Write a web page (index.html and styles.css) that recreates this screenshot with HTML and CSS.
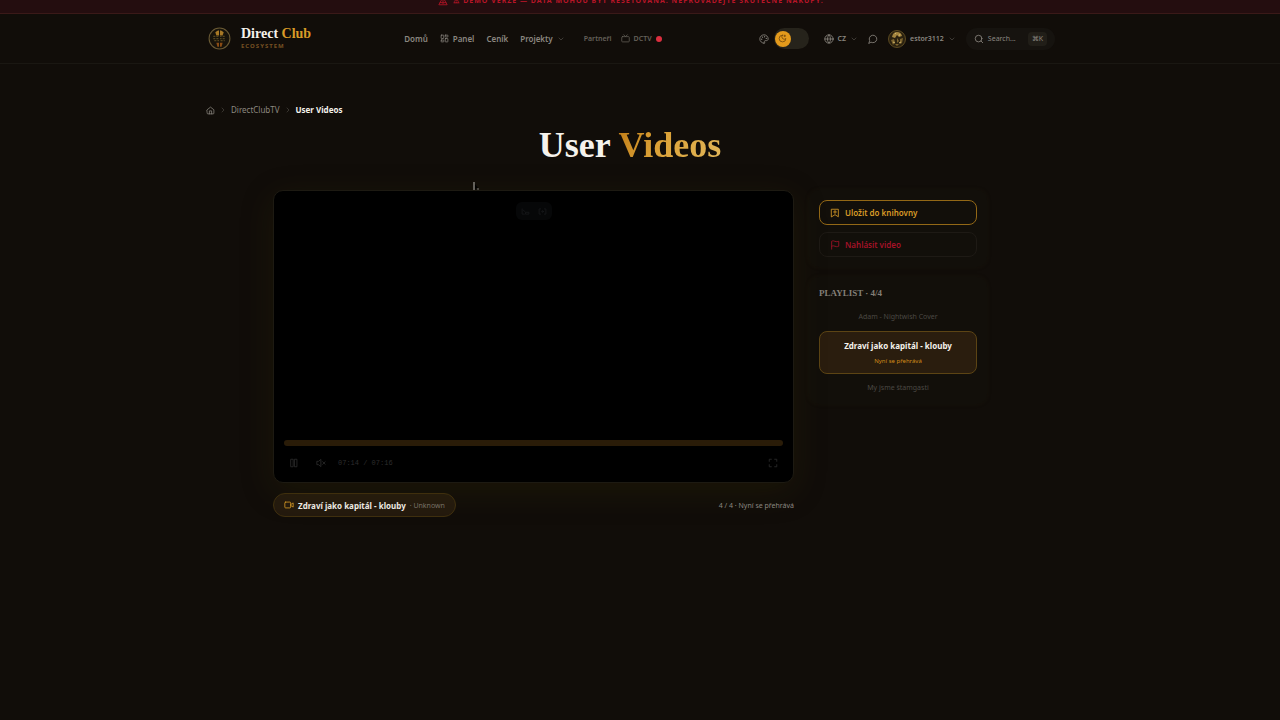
FILE: index.html
```html
<!DOCTYPE html>
<html lang="cs">
<head>
    <meta charset="UTF-8">
    <meta name="viewport" content="width=device-width, initial-scale=1.0">
    <title>User Videos</title>
    <link rel="stylesheet" href="styles.css">
</head>
<body>
    <!-- Demo banner -->
    <div class="banner">
        <p class="banner-text">
            <svg class="icon" viewBox="0 0 24 24"><path d="M12 3 2 21h20L12 3zM12 10v5M12 18v.5M5 16h14"/></svg>
            <span>⚠ Demo verze — data mohou být resetována. Neprovádějte skutečné nákupy.</span>
        </p>
    </div>

    <!-- Header -->
    <header class="header">
        <div class="header-inner">
            <a class="brand" href="#">
                <svg class="brand-logo" viewBox="0 0 24 24">
                    <circle cx="12" cy="12" r="10" fill="#17130b" stroke="#6a5a34" stroke-width="1"/>
                    <path d="M8 6q4-4 8 0l-1 3H9z" fill="#a87925"/>
                    <path d="M6 10h12M6 12h12M7 14h10" stroke="#54451f" stroke-width="1.2" stroke-dasharray="2 1"/>
                    <path d="M9 16h6l-1 4h-4z" fill="#8a4c14"/>
                    <path d="M12 3v18" stroke="#17130b" stroke-width="1"/>
                </svg>
                <span class="brand-text">
                    <span class="brand-name">Direct <span class="gold">Club</span></span>
                    <span class="brand-sub">Ecosystem</span>
                </span>
            </a>

            <nav class="nav">
                <a href="#">Domů</a>
                <a href="#">
                    <svg class="icon" viewBox="0 0 24 24"><rect x="3" y="3" width="7" height="9" rx="1"/><rect x="14" y="3" width="7" height="5" rx="1"/><rect x="14" y="12" width="7" height="9" rx="1"/><rect x="3" y="16" width="7" height="5" rx="1"/></svg>
                    Panel
                </a>
                <a href="#">Ceník</a>
                <a href="#">
                    Projekty
                    <svg class="icon chevron" viewBox="0 0 24 24"><path d="m6 9 6 6 6-6"/></svg>
                </a>
                <span class="nav-minor">
                    <a href="#">Partneři</a>
                    <a href="#">
                        <svg class="icon" viewBox="0 0 24 24"><rect x="2" y="7" width="20" height="14" rx="2"/><path d="m17 2-5 5-5-5"/></svg>
                        DCTV
                        <span class="live-dot"></span>
                    </a>
                </span>
            </nav>

            <div class="tools">
                <div class="theme">
                    <button class="icon-button" aria-label="Paleta">
                        <svg class="icon" viewBox="0 0 24 24"><path d="M12 22a10 10 0 1 1 10-10c0 3-2.500 4-5 4h-2c-2 0-2.500 2-1.500 3s0 3-1.500 3z"/><path d="M13.500 6.500v.1M17.500 10.500v.1M8.500 7.500v.1M6.500 12.500v.1" stroke-width="3"/></svg>
                    </button>
                    <button class="switch" aria-label="Tmavý režim">
                        <span class="switch-knob">
                            <svg class="icon" viewBox="0 0 24 24"><path d="M12 3a6 6 0 0 0 9 9 9 9 0 1 1-9-9zM18 3v4M16 5h4"/></svg>
                        </span>
                    </button>
                </div>
                <button class="tool-button">
                    <svg class="icon" viewBox="0 0 24 24"><circle cx="12" cy="12" r="10"/><path d="M12 2a15 15 0 0 0 0 20 15 15 0 0 0 0-20M2 12h20"/></svg>
                    CZ
                    <svg class="icon chevron" viewBox="0 0 24 24"><path d="m6 9 6 6 6-6"/></svg>
                </button>
                <button class="icon-button" aria-label="Zprávy">
                    <svg class="icon" viewBox="0 0 24 24"><path d="M7.900 20A9 9 0 1 0 4 16.100L2 22z"/></svg>
                </button>
                <button class="tool-button user">
                    <svg class="avatar" viewBox="0 0 18 18">
                        <circle cx="9" cy="9" r="8.500" fill="#2a2110" stroke="#5d4b22"/>
                        <path d="M4 7q1-5 5-5t5 4l-3 1-2-2-2 3z" fill="#a58640"/>
                        <path d="M3 10l3-1 1 3-2 3zM9 8l2 3-2 2zM12 9l3-1-1 5-2 1zM7 14h4l-2 2z" fill="#7c642e"/>
                        <path d="M7 3l1 1M12 4l-1 2M5 12l2 1M11 13l2-1" stroke="#d0b56a"/>
                    </svg>
                    estor3112
                    <svg class="icon chevron" viewBox="0 0 24 24"><path d="m6 9 6 6 6-6"/></svg>
                </button>
                <button class="search">
                    <svg class="icon" viewBox="0 0 24 24"><circle cx="11" cy="11" r="8"/><path d="m21 21-4.300-4.300"/></svg>
                    Search...
                    <kbd>⌘K</kbd>
                </button>
            </div>
        </div>
    </header>

    <main class="page">
        <nav class="breadcrumb">
            <a href="#" aria-label="Home"><svg class="icon" viewBox="0 0 24 24"><path d="M3 10l9-7 9 7v9a2 2 0 0 1-2 2H5a2 2 0 0 1-2-2zM9 21v-8h6v8"/></svg></a>
            <svg class="icon separator" viewBox="0 0 24 24"><path d="m9 18 6-6-6-6"/></svg>
            <a href="#">DirectClubTV</a>
            <svg class="icon separator" viewBox="0 0 24 24"><path d="m9 18 6-6-6-6"/></svg>
            <span class="current">User Videos</span>
        </nav>

        <h1>User <span class="gold">Videos</span></h1>

        <div class="watch">
            <section class="video">
                <div class="player">
                    <div class="player-badge">
                        <svg class="icon" viewBox="0 0 24 24"><path d="M3 5v14h6M13 14h8v5h-8zM6 8l4 4"/></svg>
                        <svg class="icon" viewBox="0 0 24 24"><path d="M7 5H3v14h4M17 5h4v14h-4"/><circle cx="12" cy="12" r="2"/></svg>
                    </div>
                    <div class="player-bottom">
                        <div class="progress"></div>
                        <div class="controls">
                            <div class="control-buttons">
                                <button class="icon-button" aria-label="Pozastavit"><svg class="icon" viewBox="0 0 24 24"><rect x="5" y="3" width="5" height="18"/><rect x="14" y="3" width="5" height="18"/></svg></button>
                                <button class="icon-button" aria-label="Zvuk"><svg class="icon" viewBox="0 0 24 24"><path d="M11 4 6 8H2v8h4l5 4zM22 9l-6 6M16 9l6 6"/></svg></button>
                            </div>
                            <span class="time">07:14 / 07:16</span>
                            <button class="icon-button fullscreen" aria-label="Celá obrazovka"><svg class="icon" viewBox="0 0 24 24"><path d="M3 8V3h5M16 3h5v5M21 16v5h-5M8 21H3v-5"/></svg></button>
                        </div>
                    </div>
                    <svg class="pointer" viewBox="0 0 6 9"><path d="M1 0v8" stroke="#b5b3ae"/><path d="M2 2l3 4H3L2 8z" fill="#000"/><path d="M4 7h2" stroke="#7d7b76"/></svg>
                </div>
                <div class="video-info">
                    <div class="video-title">
                        <svg class="icon" viewBox="0 0 24 24"><rect x="2" y="5" width="14" height="14" rx="2"/><path d="m16 13 6 4V7l-6 4"/></svg>
                        <strong>Zdraví jako kapitál - klouby</strong>
                        <span>· Unknown</span>
                    </div>
                    <span class="position">4 / 4 · Nyní se přehrává</span>
                </div>
            </section>

            <aside class="sidebar">
                <div class="panel actions">
                    <button class="action save">
                        <svg class="icon" viewBox="0 0 24 24"><path d="M4 3h16v18l-8-5-8 5zM12 6v7M8.500 9.500h7"/></svg>
                        Uložit do knihovny
                    </button>
                    <button class="action report">
                        <svg class="icon" viewBox="0 0 24 24"><path d="M4 22V3s2-1 4-1 4 2 7 2 6-1 6-1v12s-2 1-5 1-5-2-8-2-4 1-4 1"/></svg>
                        Nahlásit video
                    </button>
                </div>
                <div class="panel playlist">
                    <h2>Playlist · 4/4</h2>
                    <button class="item">Adam - Nightwish Cover</button>
                    <button class="item active">
                        <strong>Zdraví jako kapitál - klouby</strong>
                        <small>Nyní se přehrává</small>
                    </button>
                    <button class="item">My jsme štamgasti</button>
                </div>
            </aside>
        </div>
    </main>
</body>
</html>
```
FILE: styles.css
```css
* {
    box-sizing: border-box;
}

body {
    margin: 0;
    min-height: 100vh;
    background-color: #110d09;
    color: #f5f2ec;
    font-family: "Noto Sans", sans-serif;
    font-size: 8px;
}

a {
    color: inherit;
    text-decoration: none;
}

button {
    padding: 0;
    border: none;
    background: none;
    color: inherit;
    font: inherit;
    cursor: pointer;
}

.icon {
    display: block;
    flex: none;
    width: 10px;
    height: 10px;
    fill: none;
    stroke: currentColor;
    stroke-width: 2;
    stroke-linecap: round;
    stroke-linejoin: round;
}

.gold {
    color: #d99b27;
}

/* Banner */
.banner {
    display: flex;
    align-items: flex-end;
    justify-content: center;
    height: 14px;
    padding: 0 18px 4px 0;
    overflow: hidden;
    background-color: #240d0f;
    border-bottom: 1px solid #3a1918;
}

.banner-text {
    display: flex;
    align-items: center;
    gap: 5px;
    margin: 0;
    color: #b81527;
    font-size: 7px;
    font-weight: 700;
    line-height: 16px;
    letter-spacing: 1px;
    text-transform: uppercase;
    white-space: nowrap;
}

/* Header */
.header {
    padding-right: 18px;
    border-bottom: 1px solid #1a1712;
}

.header-inner {
    display: flex;
    align-items: center;
    justify-content: space-between;
    max-width: 848px;
    height: 49px;
    margin: 0 auto;
    color: #8b8780;
}

.brand {
    display: flex;
    align-items: center;
    gap: 9px;
}

.brand-logo {
    width: 25px;
    height: 25px;
}

.brand-text {
    display: flex;
    flex-direction: column;
}

.brand-name {
    color: #f5f2ec;
    font-family: Georgia, "Liberation Serif", serif;
    font-size: 14px;
    font-weight: 700;
    line-height: 14px;
}

.brand-sub {
    color: #765022;
    font-size: 6px;
    font-weight: 700;
    line-height: 10px;
    letter-spacing: 1px;
    text-transform: uppercase;
}

.nav {
    display: flex;
    align-items: center;
    gap: 12px;
    margin-right: 4px;
    font-weight: 600;
}

.nav a {
    display: flex;
    align-items: center;
    gap: 4px;
}

.nav .icon {
    width: 9px;
    height: 9px;
}

.header .chevron {
    width: 8px;
    height: 8px;
    color: #56524b;
}

.nav-minor {
    display: flex;
    align-items: center;
    gap: 9px;
    padding-left: 7px;
    color: #65615a;
    font-size: 7px;
}

.live-dot {
    width: 6px;
    height: 6px;
    border-radius: 50%;
    background-color: #dc2f3f;
}

.tools {
    display: flex;
    align-items: center;
    gap: 10px;
    font-size: 7px;
    font-weight: 600;
}

.theme {
    display: flex;
    align-items: center;
    gap: 5px;
    margin-right: 5px;
}

.switch {
    width: 35px;
    height: 21px;
    padding: 2px 1px;
    border-radius: 11px;
    background-color: #26231b;
}

.switch-knob {
    display: flex;
    align-items: center;
    justify-content: center;
    width: 16px;
    height: 16px;
    border-radius: 50%;
    background-color: #e39a1c;
    color: #6b430c;
}

.switch .icon {
    width: 9px;
    height: 9px;
}

.tool-button {
    display: flex;
    align-items: center;
    gap: 4px;
}

.avatar {
    width: 18px;
    height: 18px;
}

.search {
    display: flex;
    align-items: center;
    gap: 4px;
    height: 22px;
    padding: 0 8px;
    border-radius: 11px;
    background-color: #16130f;
    font-weight: 400;
}

.search kbd {
    margin-left: 8px;
    padding: 0 4px;
    border-radius: 4px;
    background-color: #211e18;
    font-family: inherit;
    line-height: 14px;
}

/* Page */
.page {
    max-width: 868px;
    margin: 0 auto;
    padding: 40px 20px 40px 0;
}

.breadcrumb {
    display: flex;
    align-items: center;
    gap: 4px;
    color: #8c8880;
    line-height: 12px;
}

.breadcrumb .icon {
    width: 9px;
    height: 9px;
}

.breadcrumb .separator {
    width: 8px;
    height: 8px;
    color: #4d4942;
}

.breadcrumb .current {
    color: #f5f2ec;
    font-weight: 700;
}

h1 {
    margin: 8px 0 24px;
    font-family: Georgia, "Liberation Serif", serif;
    font-size: 36px;
    font-weight: 700;
    line-height: 42px;
    text-align: center;
}

h1 .gold {
    background: linear-gradient(120deg, #c07c17, #dba136 40%, #e2b75b);
    -webkit-background-clip: text;
    background-clip: text;
    color: transparent;
}

.watch {
    display: grid;
    grid-template-columns: 1fr 178px;
    gap: 15px;
    align-items: start;
    max-width: 714px;
    margin: 0 auto;
}

/* Player */
.player {
    position: relative;
    display: flex;
    flex-direction: column;
    align-items: center;
    justify-content: space-between;
    aspect-ratio: 16 / 9;
    padding: 11px 10px;
    border: 1px solid #1d1a12;
    border-radius: 10px;
    background-color: #000;
    box-shadow: 0 8px 32px rgba(60, 50, 0, 0.25);
    color: #2d2d2d;
}

.player-badge {
    display: flex;
    align-items: center;
    justify-content: center;
    gap: 8px;
    width: 36px;
    height: 18px;
    border-radius: 6px;
    background-color: #060708;
    color: #191b1d;
}

.player-badge .icon {
    width: 9px;
    height: 9px;
}

.player-bottom {
    width: 100%;
}

.progress {
    height: 6px;
    border-radius: 3px;
    background-color: #2a1c08;
}

.controls {
    display: flex;
    align-items: center;
    gap: 12px;
    padding: 12px 5px 3px;
}

.control-buttons {
    display: flex;
    gap: 17px;
}

.time {
    font-family: "Liberation Mono", monospace;
    font-size: 7px;
    line-height: 10px;
}

.fullscreen {
    margin-left: auto;
}

.pointer {
    position: absolute;
    top: -9px;
    left: 199px;
    width: 6px;
    height: 9px;
}

.video-info {
    display: flex;
    align-items: center;
    justify-content: space-between;
    margin-top: 10px;
}

.video-title {
    display: flex;
    align-items: center;
    gap: 4px;
    height: 24px;
    padding: 0 10px;
    border: 1px solid #40300f;
    border-radius: 12px;
    background-color: #241a0e;
}

.video-title .icon {
    color: #d99b27;
}

.video-title span {
    color: #7b746a;
    font-size: 7px;
}

.position {
    color: #8f8b84;
    font-size: 7px;
}

/* Sidebar */
.sidebar {
    display: flex;
    flex-direction: column;
    gap: 10px;
}

.panel {
    display: flex;
    flex-direction: column;
    padding: 10px;
    border-radius: 10px;
    background-color: #120f0a;
    box-shadow: 0 0 4px rgba(40, 34, 16, 0.3);
}

.actions {
    gap: 7px;
}

.action {
    display: flex;
    align-items: center;
    gap: 5px;
    height: 25px;
    padding: 0 10px;
    border: 1px solid #1e1a15;
    border-radius: 8px;
    font-weight: 600;
}

.save {
    border-color: #936816;
    color: #d99b27;
}

.report {
    color: #a51228;
}

.playlist h2 {
    margin: 0 0 12px;
    color: #837f77;
    font-family: Georgia, "Liberation Serif", serif;
    font-size: 9px;
    font-weight: 700;
    line-height: 12px;
    text-transform: uppercase;
}

.item {
    padding: 0 8px;
    color: #4b4843;
    font-size: 7px;
    line-height: 12px;
    text-align: center;
}

.item.active {
    display: flex;
    flex-direction: column;
    gap: 3px;
    align-items: center;
    margin: 8px 0;
    padding: 7px 8px;
    border: 1px solid #5c4414;
    border-radius: 8px;
    background-color: #2a1d0e;
    color: #f5f2ec;
}

.item strong {
    font-size: 8px;
    line-height: 14px;
}

.item small {
    color: #d08c18;
    font-size: 6px;
    line-height: 10px;
}
```
